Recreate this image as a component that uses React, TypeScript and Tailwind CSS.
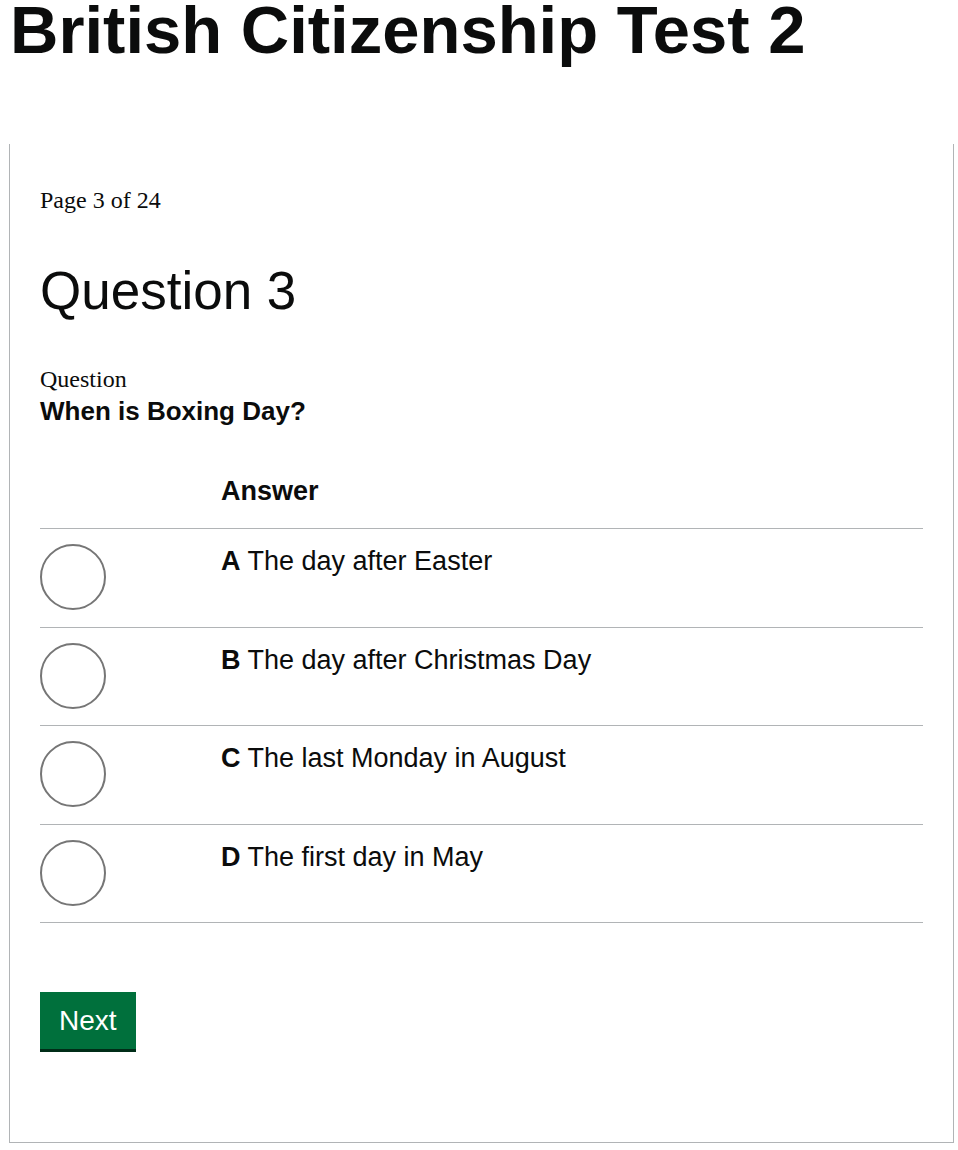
const answers = [
  { letter: 'A', text: 'The day after Easter' },
  { letter: 'B', text: 'The day after Christmas Day' },
  { letter: 'C', text: 'The last Monday in August' },
  { letter: 'D', text: 'The first day in May' },
];

const sans = "font-['Liberation_Sans',Arial,sans-serif]";
const serif = "font-['Liberation_Serif','Times_New_Roman',serif]";

export default function App() {
  return (
    <div className="min-h-[1150px] bg-white text-[#0b0c0c]">
      <h1 className={`${sans} pl-[10px] text-[67px] leading-[60px] font-bold`}>
        British Citizenship Test 2
      </h1>

      <div className="mt-[84px] ml-[9px] w-[945px] border-x border-b border-[#b1b4b6] px-[30px] pt-[42px] pb-[93px]">
        <p className={`${serif} text-[24px] leading-[28px]`}>Page 3 of 24</p>

        <h2 className={`${sans} mt-[47px] text-[53px] leading-[60px]`}>Question 3</h2>

        <div className="mt-[41px]">
          <p className={`${serif} text-[24px] leading-[34px]`}>Question</p>
          <p className={`${sans} text-[26px] leading-[30px] font-bold`}>When is Boxing Day?</p>
        </div>

        <table className={`${sans} mt-[50px] w-[883px] border-collapse`}>
          <thead>
            <tr>
              <th className="w-[181px]"></th>
              <th className="pb-[22px] text-left text-[27px] leading-[30px] font-bold">Answer</th>
            </tr>
          </thead>
          <tbody>
            {answers.map((a) => (
              <tr key={a.letter} className="border-t border-[#b1b4b6]">
                <td className="pt-[15px] pb-[16.5px] align-top">
                  <div className="h-[66px] w-[66px] rounded-full border-2 border-[#767676]"></div>
                </td>
                <td className="pt-[16px] align-top text-[27px] leading-[32px]">
                  <span className="font-bold">{a.letter}</span> {a.text}
                </td>
              </tr>
            ))}
            <tr className="border-t border-[#b1b4b6]">
              <td colSpan={2}></td>
            </tr>
          </tbody>
        </table>

        <button
          className={`${sans} mt-[69px] flex h-[57px] items-center bg-[#00703c] px-[19px] text-[28px] leading-[30px] text-white shadow-[0_3px_0_#002d18]`}
        >
          Next
        </button>
      </div>
    </div>
  );
}
